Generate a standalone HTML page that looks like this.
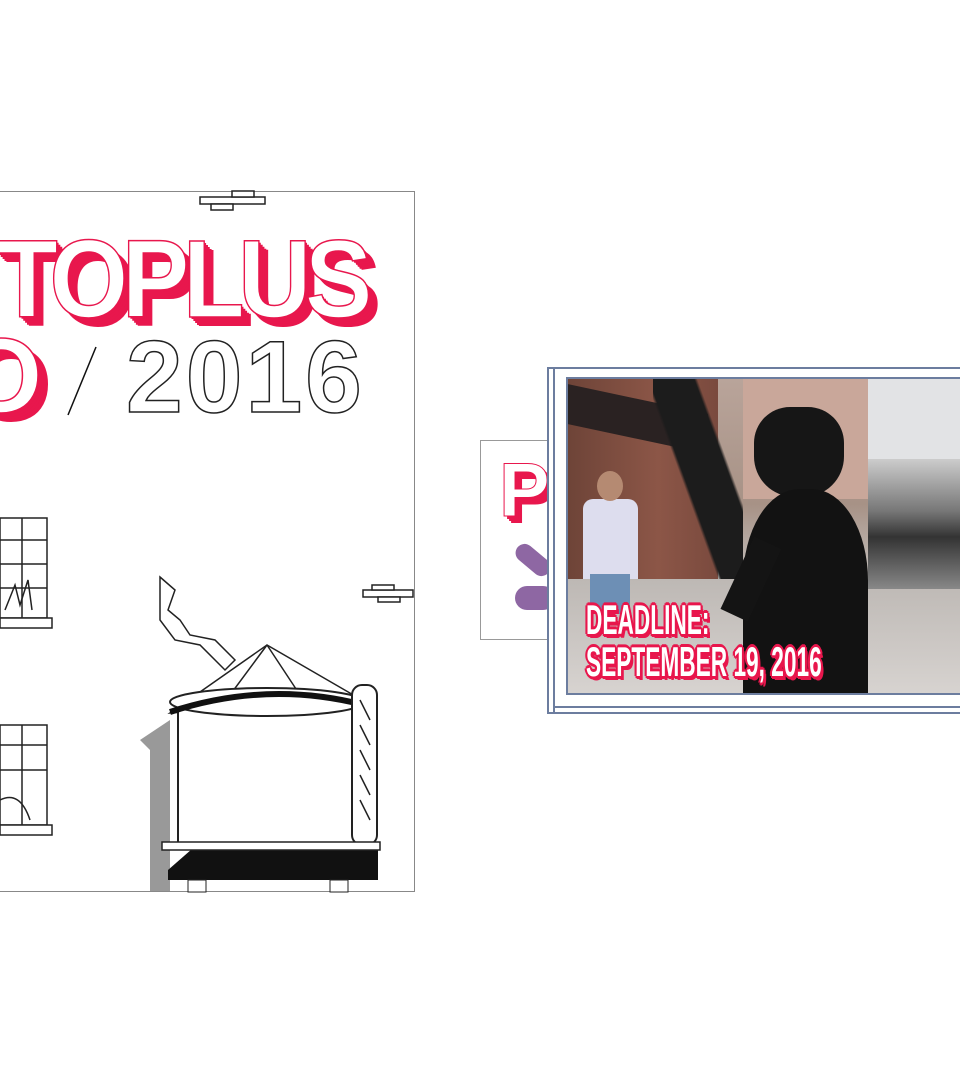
<!DOCTYPE html>
<html><head><meta charset="utf-8"><style>
html,body{margin:0;padding:0;background:#fff;width:960px;height:1080px;overflow:hidden;position:relative;font-family:"Liberation Sans",sans-serif}
.abs{position:absolute}
.red{color:#fff;font-weight:bold;-webkit-text-stroke:1.5px #e8174d;text-shadow:2px 2px 0 #e8174d,4px 4px 0 #e8174d,6px 6px 0 #e8174d,8px 8px 0 #e8174d,10px 9px 0 #e8174d}
.dl{font-weight:bold;color:#fff;transform:scaleX(.54);transform-origin:left top;white-space:nowrap;text-shadow:0 0 3px #e8174d,2px 2px 0 #e8174d,-2px -2px 0 #e8174d,2px -2px 0 #e8174d,-2px 2px 0 #e8174d,4px 0 0 #e8174d,-4px 0 0 #e8174d,0 3px 0 #e8174d,0 -3px 0 #e8174d,5px 4px 0 #e8174d}
</style></head><body>
<div class="abs" style="left:-2px;top:191px;width:415px;height:699px;border:1px solid #888"></div>
<div class="abs red" style="left:-4px;top:225px;font-size:110px;letter-spacing:-7px;line-height:110px;transform:scaleX(.92);transform-origin:left top;white-space:nowrap">TOPLUS</div>
<div class="abs red" style="left:-40px;top:321px;font-size:106px;line-height:110px">O</div>
<div class="abs" style="left:126px;top:322px;font-size:102px;line-height:110px;font-weight:bold;color:#fff;-webkit-text-stroke:1.5px #222;letter-spacing:3px">2016</div>
<svg class="abs" style="left:0;top:180px" width="420" height="720">
<line x1="68" y1="235" x2="96" y2="167" stroke="#111" stroke-width="1.5"/>
<g fill="#fff" stroke="#222" stroke-width="1.5">
<rect x="200" y="17" width="65" height="7"/><rect x="232" y="11" width="22" height="6"/><rect x="211" y="24" width="22" height="6"/>
<rect x="363" y="410" width="50" height="7"/><rect x="372" y="405" width="22" height="5"/><rect x="378" y="417" width="22" height="5"/>
<rect x="0" y="338" width="47" height="100"/><rect x="0" y="438" width="52" height="10"/>
<rect x="0" y="545" width="47" height="100"/><rect x="0" y="645" width="52" height="10"/>
</g>
<g stroke="#222" stroke-width="1.5" fill="none">
<path d="M0 360H47M0 384H47M0 408H47M22 338V438M0 565H47M0 590H47M22 545V645"/>
<path d="M5 430L15 405L20 425L28 400L32 430"/>
<path d="M0 620Q20 610 30 640"/>
</g>
<path d="M160 397L175 410L168 430L180 440L190 455L215 460L235 480L225 490L200 465L175 460L160 440Z" fill="#fff" stroke="#222" stroke-width="1.5"/>
<path d="M140 560L170 540V711H150V570Z" fill="#999"/>
<path d="M170 533L267 465L362 520Z" fill="#fff" stroke="#222" stroke-width="1.5"/>
<path d="M267 465L230 515M267 465L300 515" stroke="#222" stroke-width="1.5"/>
<rect x="178" y="520" width="178" height="145" fill="#fff" stroke="#222" stroke-width="2"/>
<ellipse cx="267" cy="522" rx="97" ry="14" fill="#fff" stroke="#222" stroke-width="2"/>
<path d="M170 532Q267 500 364 525" stroke="#111" stroke-width="6" fill="none"/>
<rect x="352" y="505" width="25" height="160" rx="10" fill="#fff" stroke="#222" stroke-width="2"/>
<path d="M360 520L370 540M360 545L370 565M360 570L370 590M360 595L370 615M360 620L370 640" stroke="#222" stroke-width="1.5"/>
<path d="M168 690L200 662H378L378 700H168Z" fill="#111"/>
<rect x="162" y="662" width="218" height="8" fill="#fff" stroke="#222" stroke-width="1.5"/>
<rect x="188" y="700" width="18" height="12" fill="#fff" stroke="#222"/>
<rect x="330" y="700" width="18" height="12" fill="#fff" stroke="#222"/>
</svg>
<div class="abs" style="left:480px;top:440px;width:80px;height:198px;border:1px solid #999;overflow:hidden;background:#fff">
<div class="abs" style="left:18px;top:10px;font-size:76px;font-weight:bold;line-height:80px;color:#fff;-webkit-text-stroke:1px #e8174d;text-shadow:3px 3px 0 #e8174d,5px 5px 0 #e8174d,7px 7px 0 #e8174d">P</div>
<div class="abs" style="left:32px;top:110px;width:40px;height:18px;background:#8e67a3;border-radius:9px;transform:rotate(40deg)"></div>
<div class="abs" style="left:34px;top:145px;width:40px;height:24px;background:#8e67a3;border-radius:12px"></div>
</div>
<div class="abs" style="left:547px;top:367px;width:420px;height:343px;border:2px solid #6c7d9f;background:#fff;box-shadow:inset 4px 0 0 #fff,inset 6px 0 0 #6c7d9f,inset 0 -4px 0 #fff,inset 0 -6px 0 #6c7d9f"></div>
<div class="abs" style="left:566px;top:377px;width:400px;height:314px;border:2px solid #6c7d9f;overflow:hidden;background:linear-gradient(180deg,#b9a49a 0,#a79286 40%,#c0bab6 60%,#cfcbc8 100%)">
<div class="abs" style="left:0;top:0;width:150px;height:314px;background:linear-gradient(90deg,#6e4438,#8c5647 60%,#7a4a3e)"></div>
<div class="abs" style="left:0;top:20px;width:140px;height:40px;background:#2a2222;transform:skewY(12deg)"></div>
<div class="abs" style="left:85px;top:0;width:90px;height:200px;background:linear-gradient(70deg,transparent 40%,#1c1c1c 42%,#1c1c1c 70%,transparent 72%)"></div>
<div class="abs" style="left:175px;top:0;width:130px;height:120px;background:#c9a79a"></div>
<div class="abs" style="left:300px;top:0;width:100px;height:100px;background:#e2e3e5"></div>
<div class="abs" style="left:0;top:200px;width:400px;height:114px;background:linear-gradient(180deg,#bdb8b4,#d7d3d0)"></div>
<div class="abs" style="left:300px;top:80px;width:100px;height:130px;background:linear-gradient(180deg,#ccc 0,#777 40%,#333 60%,#888 100%)"></div>
<div class="abs" style="left:15px;top:120px;width:55px;height:80px;background:#dde;border-radius:10px 10px 0 0"></div>
<div class="abs" style="left:22px;top:195px;width:40px;height:40px;background:#6d8fb5"></div>
<div class="abs" style="left:29px;top:92px;width:26px;height:30px;background:#b58a72;border-radius:50%"></div>
<div class="abs" style="left:186px;top:28px;width:90px;height:90px;background:#161616;border-radius:40% 40% 45% 45%"></div>
<div class="abs" style="left:175px;top:110px;width:125px;height:204px;background:#121212;border-radius:45% 45% 0 0"></div>
<div class="abs" style="left:168px;top:160px;width:30px;height:80px;background:#141414;transform:rotate(25deg)"></div>
<div class="abs dl" style="left:18px;top:220px;font-size:42px;line-height:42px">DEADLINE:<br>SEPTEMBER 19, 2016</div>
</div>
</body></html>
